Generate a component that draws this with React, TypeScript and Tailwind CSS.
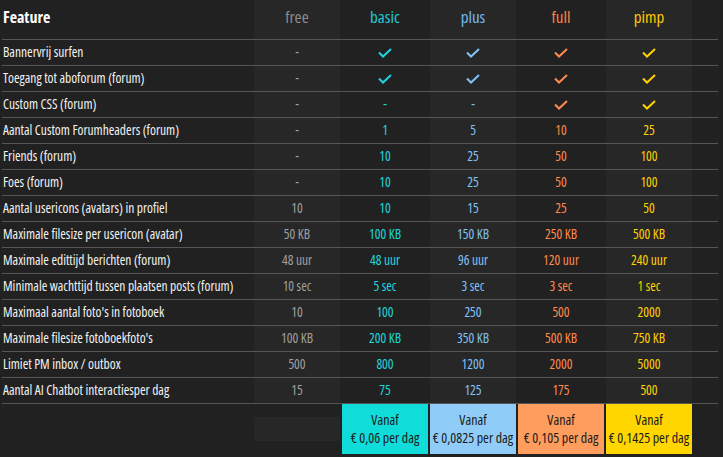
import React from "react";

type Cell = string | true;

const font = { fontFamily: '"Open Sans", "Liberation Sans", sans-serif', fontStretch: "75%" };

const tiers = [
  { name: "free", head: "text-[#8c8c8c]", text: "text-[#a0a0a0]", bg: "bg-[#272727]" },
  { name: "basic", head: "text-[#22c8d4]", text: "text-[#1fd6dc]", bg: "bg-[#212121]" },
  { name: "plus", head: "text-[#74b8f4]", text: "text-[#82c2f7]", bg: "bg-[#272727]" },
  { name: "full", head: "text-[#ff8340]", text: "text-[#ff8a4c]", bg: "bg-[#212121]" },
  { name: "pimp", head: "text-[#ffc800]", text: "text-[#ffd200]", bg: "bg-[#272727]" },
];

const rows: [string, Cell[]][] = [
  ["Bannervrij surfen", ["-", true, true, true, true]],
  ["Toegang tot aboforum (forum)", ["-", true, true, true, true]],
  ["Custom CSS (forum)", ["-", "-", "-", true, true]],
  ["Aantal Custom Forumheaders (forum)", ["-", "1", "5", "10", "25"]],
  ["Friends (forum)", ["-", "10", "25", "50", "100"]],
  ["Foes (forum)", ["-", "10", "25", "50", "100"]],
  ["Aantal usericons (avatars) in profiel", ["10", "10", "15", "25", "50"]],
  ["Maximale filesize per usericon (avatar)", ["50 KB", "100 KB", "150 KB", "250 KB", "500 KB"]],
  ["Maximale edittijd berichten (forum)", ["48 uur", "48 uur", "96 uur", "120 uur", "240 uur"]],
  ["Minimale wachttijd tussen plaatsen posts (forum)", ["10 sec", "5 sec", "3 sec", "3 sec", "1 sec"]],
  ["Maximaal aantal foto's in fotoboek", ["10", "100", "250", "500", "2000"]],
  ["Maximale filesize fotoboekfoto's", ["100 KB", "200 KB", "350 KB", "500 KB", "750 KB"]],
  ["Limiet PM inbox / outbox", ["500", "800", "1200", "2000", "5000"]],
  ["Aantal AI Chatbot interactiesper dag", ["15", "75", "125", "175", "500"]],
];

const prices = [
  { bg: "bg-[#10dcd9]", price: "€ 0,06 per dag" },
  { bg: "bg-[#8fcdf8]", price: "€ 0,0825 per dag" },
  { bg: "bg-[#ff9d5e]", price: "€ 0,105 per dag" },
  { bg: "bg-[#ffd600]", price: "€ 0,1425 per dag" },
];

function Check() {
  return (
    <svg width="14" height="10" viewBox="0 0 14 10" fill="none">
      <path d="M1 4.5 L5 8.5 L13 1" stroke="currentColor" strokeWidth="2" />
    </svg>
  );
}

export default function App() {
  return (
    <div className="w-[723px] h-[457px] bg-[#212121] overflow-hidden" style={font}>
      <div className="ml-[2px] w-[716px] h-[40px] flex gap-[2px] border-b border-[#555]">
        <div className="w-[250px] flex items-center pl-[1px] pb-[5px] text-[16px] font-bold text-white">Feature</div>
        {tiers.map((t) => (
          <div key={t.name} className={`w-[86px] flex items-center justify-center pb-[5px] text-[17px] font-medium ${t.bg} ${t.head}`}>
            {t.name}
          </div>
        ))}
      </div>
      {rows.map(([label, cells]) => (
        <div key={label} className="ml-[2px] w-[716px] h-[26px] flex gap-[2px] border-b border-[#555]">
          <div className="w-[250px] flex items-center pl-[1px] text-[13.5px] font-medium text-[#f2f2f2] whitespace-nowrap">{label}</div>
          {cells.map((c, i) => (
            <div key={i} className={`w-[86px] flex items-center justify-center text-[13.5px] font-medium ${tiers[i].bg} ${tiers[i].text}`}>
              {c === true ? <Check /> : c}
            </div>
          ))}
        </div>
      ))}
      <div className="ml-[2px] w-[716px] flex gap-[2px]">
        <div className="w-[250px]" />
        <div className="w-[86px] h-6 self-center bg-[#272727]" />
        {prices.map((p) => (
          <div key={p.price} className={`w-[86px] h-[50px] flex flex-col items-center justify-center text-[14px] font-medium leading-[18px] text-[#1a1a1a] ${p.bg}`}>
            <span>Vanaf</span>
            <span className="whitespace-nowrap">{p.price}</span>
          </div>
        ))}
      </div>
    </div>
  );
}
